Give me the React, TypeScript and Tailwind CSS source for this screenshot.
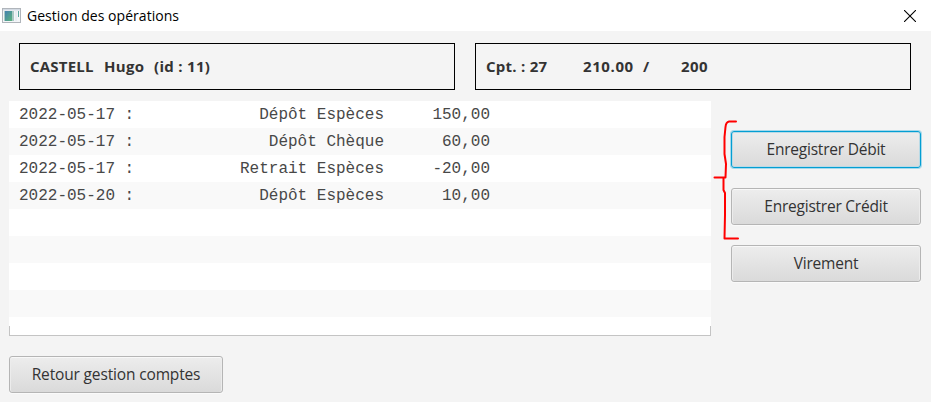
const operations = [
  { date: "2022-05-17", label: "Dépôt Espèces", amount: "150,00" },
  { date: "2022-05-17", label: "Dépôt Chèque", amount: "60,00" },
  { date: "2022-05-17", label: "Retrait Espèces", amount: "-20,00" },
  { date: "2022-05-20", label: "Dépôt Espèces", amount: "10,00" },
];

const ROW_COUNT = 9;

function WindowIcon() {
  return (
    <svg width="19" height="16" viewBox="0 0 19 16" className="block shrink-0">
      <defs>
        <linearGradient id="pane" x1="0" y1="0" x2="1" y2="1">
          <stop offset="0" stopColor="#4380b0" />
          <stop offset="1" stopColor="#5cb47c" />
        </linearGradient>
      </defs>
      <rect x="0.5" y="0.5" width="18" height="14" fill="#f4f6f8" stroke="#b0b5bb" />
      <rect x="1" y="1" width="17" height="1.5" fill="#d3dae3" />
      <rect x="2" y="3" width="10" height="10" fill="#a9c9c4" />
      <rect x="3" y="3" width="7" height="10" fill="url(#pane)" />
      <rect x="13" y="3" width="2" height="10" fill="#e8edf3" />
      <rect x="16" y="3" width="1" height="6" fill="#5fa8a0" />
    </svg>
  );
}

function ActionButton({ label, focused, width, tracking }: { label: string; focused?: boolean; width: string; tracking: string }) {
  const edge = focused
    ? "border-[#039ed3] shadow-[0_0_0_1px_#a5d9eb,inset_0_0_0_1px_#b9dae6]"
    : "border-[#b5b5b5] shadow-[inset_0_1px_0_#f8f8f8,inset_1px_0_0_#ececec,inset_-1px_0_0_#ececec,0_1px_0_#fafafa]";
  return (
    <button
      className={`flex h-[37px] ${width} items-center justify-center rounded-[3px] border bg-linear-to-b from-[#ededed] to-[#dadada] pt-px text-[15.5px] leading-none text-[#333333] ${edge}`}
    >
      <span className={`whitespace-nowrap ${tracking}`}>{label}</span>
    </button>
  );
}

export default function App() {
  return (
    <div className="relative h-[402px] w-[931px] overflow-hidden bg-[#f4f4f4] font-['Open_Sans','Noto_Sans',sans-serif] text-[#333333]">
      <header className="flex h-[31px] items-center bg-white pl-[2px] pr-[15px]">
        <WindowIcon />
        <h1 className="ml-[6px] text-[14px] leading-none tracking-[0.04px] text-black">Gestion des opérations</h1>
        <svg width="12" height="12" viewBox="0 0 12 12" className="ml-auto block" stroke="#000" strokeWidth="1.1">
          <path d="M0 0L12 12M12 0L0 12" />
        </svg>
      </header>

      <section className="mt-3 flex gap-5 pl-[19px] pr-5 text-[15px] font-bold">
        <div className="flex h-[47px] flex-1 items-center whitespace-pre border border-black pl-[10px]">
          <span className="w-[74px] tracking-[0.2px]">CASTELL</span>
          <span className="w-[50px] tracking-[0.3px]">Hugo</span>
          <span className="tracking-[0.3px]">(id : 11)</span>
        </div>
        <div className="flex h-[47px] flex-1 items-center whitespace-pre border border-black pl-[10px]">
          <span className="w-[97px] tracking-[0.25px]">Cpt. : 27</span>
          <span className="w-[60px] tracking-[0.6px]">210.00</span>
          <span className="w-[38px]">/</span>
          <span className="tracking-[0.4px]">200</span>
        </div>
      </section>

      <main className="mt-[11px] flex pl-[9px]">
        <div className="relative h-[235px] w-[702px] overflow-hidden font-['Liberation_Mono',monospace] text-base text-[#484848]">
          {Array.from({ length: ROW_COUNT }, (_, i) => {
            const op = operations[i];
            return (
              <div key={i} className={`flex h-[27px] items-center pl-[10px] ${i % 2 ? "bg-[#f9f9f9]" : "bg-white"}`}>
                {op && (
                  <>
                    <span className="w-[125px]">{op.date} :</span>
                    <span className="w-[240px] text-right">{op.label}</span>
                    <span className="w-[106px] text-right">{op.amount}</span>
                  </>
                )}
              </div>
            );
          })}
          <div className="absolute inset-x-0 bottom-0 h-[10px] border-x border-b border-[#c4c4c4]" />
        </div>
        <nav className="ml-5 mt-[30px] flex flex-col gap-5">
          <ActionButton label="Enregistrer Débit" width="w-[190px]" tracking="tracking-[-0.23px]" focused />
          <ActionButton label="Enregistrer Crédit" width="w-[190px]" tracking="tracking-[-0.23px]" />
          <ActionButton label="Virement" width="w-[190px]" tracking="tracking-[-0.2px]" />
        </nav>
      </main>

      <footer className="mt-5 pl-[9px]">
        <ActionButton label="Retour gestion comptes" width="w-[214px]" tracking="tracking-[-0.15px]" />
      </footer>

      <svg
        className="pointer-events-none absolute left-[710px] top-[115px]"
        width="34"
        height="130"
        viewBox="710 115 34 130"
        fill="none"
        stroke="#ff0000"
        strokeWidth="2"
        strokeLinecap="round"
        strokeLinejoin="round"
      >
        <path d="M736 121.5H729Q726 122 725.5 127L724.5 137V154L726 164L725.5 177.5H714.5" />
        <path d="M723.5 178V190L725 193V215L724.5 238.5H738" />
      </svg>
    </div>
  );
}
